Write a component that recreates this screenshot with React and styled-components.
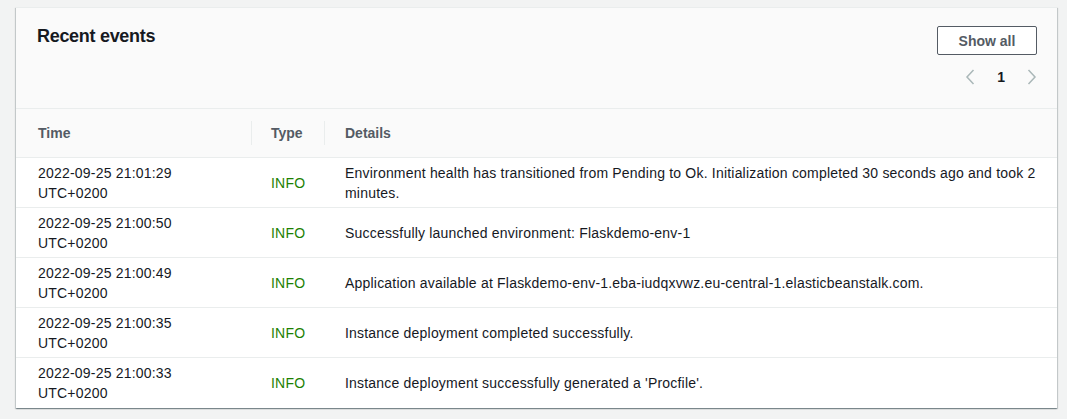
import React from "react";
import styled, { createGlobalStyle } from "styled-components";

const Global = createGlobalStyle`
  html, body { margin: 0; padding: 0; background: #f2f3f3; }
  body { font-family: "Liberation Sans", Arial, sans-serif; color: #16191f; }
`;

const Page = styled.div`
  padding: 7px 10px 10px 16px;
`;

const Card = styled.section`
  background: #ffffff;
  box-shadow: 0 1px 1px 0 rgba(0, 28, 36, 0.3), 1px 1px 1px 0 rgba(0, 28, 36, 0.15),
    -1px 1px 1px 0 rgba(0, 28, 36, 0.15);
  border-top: 1px solid #eaeded;
  overflow: hidden;
`;

const Header = styled.header`
  background: #fafafa;
  border-bottom: 1px solid #eaeded;
  display: flex;
  justify-content: space-between;
  align-items: flex-start;
  padding: 18px 20px 0 21px;
  height: 101px;
  box-sizing: border-box;
`;

const Title = styled.h2`
  margin: 0;
  font-size: 18px;
  line-height: 20px;
  font-weight: 700;
  letter-spacing: -0.3px;
  color: #16191f;
`;

const Actions = styled.div`
  display: flex;
  flex-direction: column;
  align-items: flex-end;
  gap: 11px;
`;

const Button = styled.button`
  width: 100px;
  height: 29px;
  box-sizing: border-box;
  background: #ffffff;
  border: 1px solid #545b64;
  border-radius: 2px;
  font-family: inherit;
  font-size: 14px;
  font-weight: 700;
  color: #545b64;
  padding: 0;
`;

const Pager = styled.div`
  display: flex;
  align-items: center;
  gap: 22px;
  height: 22px;
`;

const PagerArrow = styled.span`
  width: 10px;
  display: flex;
  justify-content: center;
  align-items: center;
`;

const PageNum = styled.span`
  font-size: 14px;
  font-weight: 700;
  color: #16191f;
`;

const Table = styled.table`
  width: 100%;
  border-collapse: collapse;
  font-size: 14px;
  letter-spacing: 0.2px;
  table-layout: fixed;
`;

const Th = styled.th`
  background: #fafafa;
  height: 48px;
  padding: 0 0 0 ${(p) => p.$pl}px;
  text-align: left;
  font-weight: 700;
  letter-spacing: 0;
  color: #545b64;
  border-bottom: 1px solid #eaeded;
  position: relative;
  width: ${(p) => (p.$w ? `${p.$w}px` : "auto")};

  ${(p) =>
    p.$divider &&
    `&::before {
      content: "";
      position: absolute;
      left: 0;
      top: 12px;
      bottom: 12px;
      width: 1px;
      background: #eaeded;
    }`}
`;

const Tr = styled.tr`
  &:not(:last-child) td {
    border-bottom: 1px solid #eaeded;
  }
`;

const Td = styled.td`
  height: 50px;
  padding: 4px 18px 4px ${(p) => p.$pl}px;
  line-height: 20px;
  vertical-align: middle;
  color: ${(p) => (p.$info ? "#1d8102" : "#16191f")};
  box-sizing: border-box;
`;

const Chevron = ({ dir }) => (
  <svg width="10" height="16" viewBox="0 0 10 16" fill="none">
    <path
      d={dir === "left" ? "M8.5 1 L2 8 L8.5 15" : "M1.5 1 L8 8 L1.5 15"}
      stroke="#aab7b8"
      strokeWidth="1.5"
    />
  </svg>
);

const events = [
  [
    "2022-09-25 21:01:29",
    "Environment health has transitioned from Pending to Ok. Initialization completed 30 seconds ago and took 2 minutes.",
  ],
  ["2022-09-25 21:00:50", "Successfully launched environment: Flaskdemo-env-1"],
  [
    "2022-09-25 21:00:49",
    "Application available at Flaskdemo-env-1.eba-iudqxvwz.eu-central-1.elasticbeanstalk.com.",
  ],
  ["2022-09-25 21:00:35", "Instance deployment completed successfully."],
  ["2022-09-25 21:00:33", "Instance deployment successfully generated a 'Procfile'."],
];

export default function App() {
  return (
    <Page>
      <Global />
      <Card>
        <Header>
          <Title>Recent events</Title>
          <Actions>
            <Button>Show all</Button>
            <Pager>
              <PagerArrow>
                <Chevron dir="left" />
              </PagerArrow>
              <PageNum>1</PageNum>
              <PagerArrow>
                <Chevron dir="right" />
              </PagerArrow>
            </Pager>
          </Actions>
        </Header>
        <Table>
          <thead>
            <tr>
              <Th $pl={22} $w={213}>Time</Th>
              <Th $pl={20} $w={53} $divider>Type</Th>
              <Th $pl={21} $divider>Details</Th>
            </tr>
          </thead>
          <tbody>
            {events.map(([time, details]) => (
              <Tr key={time}>
                <Td $pl={22}>
                  {time}
                  <br />
                  UTC+0200
                </Td>
                <Td $pl={20} $info>
                  INFO
                </Td>
                <Td $pl={21}>{details}</Td>
              </Tr>
            ))}
          </tbody>
        </Table>
      </Card>
    </Page>
  );
}
